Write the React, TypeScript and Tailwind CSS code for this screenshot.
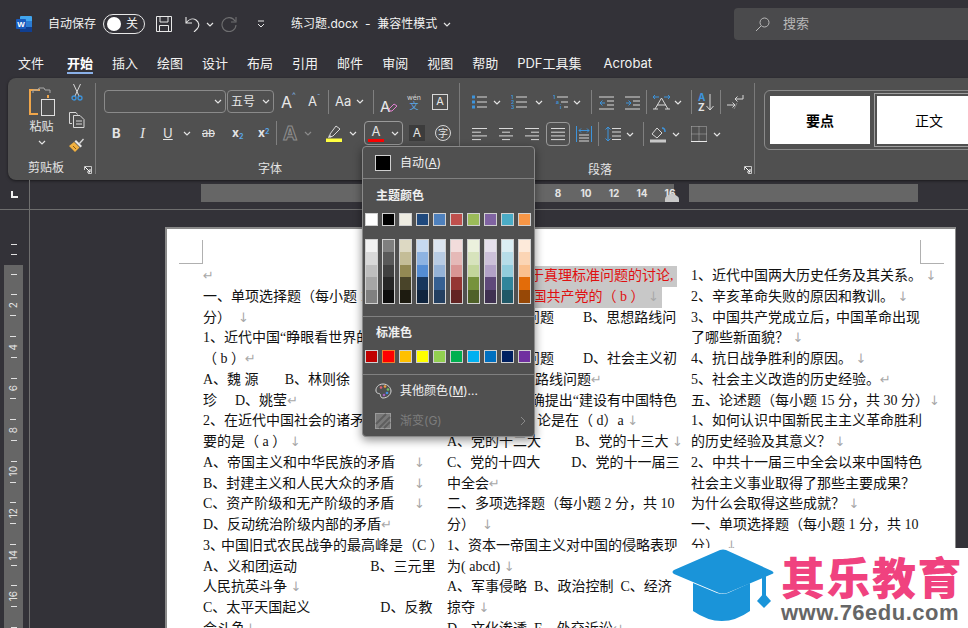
import type { ReactNode } from "react";

const menuText = "font-['Inter','Noto_Sans_CJK_SC',sans-serif]";

const themeTop = [
  "bg-[#FFFFFF]", "bg-[#000000]", "bg-[#EEECE1]", "bg-[#1F497D]", "bg-[#4F81BD]",
  "bg-[#C0504D]", "bg-[#9BBB59]", "bg-[#8064A2]", "bg-[#4BACC6]", "bg-[#F79646]",
];
const themeShades = [
  ["bg-[#F2F2F2]", "bg-[#D9D9D9]", "bg-[#BFBFBF]", "bg-[#A6A6A6]", "bg-[#808080]"],
  ["bg-[#7F7F7F]", "bg-[#595959]", "bg-[#404040]", "bg-[#262626]", "bg-[#0D0D0D]"],
  ["bg-[#DDD9C3]", "bg-[#C4BD97]", "bg-[#938953]", "bg-[#494429]", "bg-[#1D1B10]"],
  ["bg-[#C6D9F0]", "bg-[#8DB3E2]", "bg-[#548DD4]", "bg-[#17365D]", "bg-[#0F243E]"],
  ["bg-[#DBE5F1]", "bg-[#B8CCE4]", "bg-[#95B3D7]", "bg-[#366092]", "bg-[#244061]"],
  ["bg-[#F2DCDB]", "bg-[#E5B9B7]", "bg-[#D99694]", "bg-[#953734]", "bg-[#632423]"],
  ["bg-[#EBF1DD]", "bg-[#D7E3BC]", "bg-[#C3D69B]", "bg-[#76923C]", "bg-[#4F6128]"],
  ["bg-[#E5E0EC]", "bg-[#CCC1D9]", "bg-[#B2A2C7]", "bg-[#5F497A]", "bg-[#3F3151]"],
  ["bg-[#DBEEF3]", "bg-[#B7DDE8]", "bg-[#92CDDC]", "bg-[#31859B]", "bg-[#205867]"],
  ["bg-[#FDEADA]", "bg-[#FBD5B5]", "bg-[#FAC08F]", "bg-[#E36C09]", "bg-[#974806]"],
];
const standard = [
  "bg-[#C00000]", "bg-[#FF0000]", "bg-[#FFC000]", "bg-[#FFFF00]", "bg-[#92D050]",
  "bg-[#00B050]", "bg-[#00B0F0]", "bg-[#0070C0]", "bg-[#002060]", "bg-[#7030A0]",
];
const tabs = ["开始", "插入", "绘图", "设计", "布局", "引用", "邮件", "审阅", "视图", "帮助"];

function Chev({ className = "" }: { className?: string }) {
  return (
    <svg width="8" height="5" viewBox="0 0 8 5" className={`shrink-0 ${className}`}>
      <path d="M1 1l3 3 3-3" fill="none" stroke="#e4e4e4" strokeWidth="1.2" />
    </svg>
  );
}

function Sep({ className = "" }: { className?: string }) {
  return <div className={`w-px h-6 bg-[#808080] shrink-0 ${className}`} />;
}

function Lines({ rows, className = "" }: { rows: [number, number][]; className?: string }) {
  return (
    <svg width="16" height="16" viewBox="0 0 16 16" className={`shrink-0 ${className}`}>
      {rows.map(([a, b], i) => (
        <path key={i} d={`M${a} ${2.5 + i * 3.7}H${b}`} stroke="#d8d8d8" strokeWidth="1" />
      ))}
    </svg>
  );
}

function Launcher({ className = "" }: { className?: string }) {
  return (
    <svg width="8" height="8" viewBox="0 0 8 8" className={`shrink-0 ${className}`}>
      <path d="M.5 4V.5H7.5V7.5H4" fill="none" stroke="#c8c8c8" />
      <path d="M1 1l5 5M6 3v3H3" fill="none" stroke="#fff" />
    </svg>
  );
}

function WordLogo() {
  return (
    <svg width="16" height="16" viewBox="0 0 16 16" className="shrink-0">
      <rect x="4" y="0" width="12" height="16" rx="1" fill="#41a5ee" />
      <rect x="4" y="5" width="12" height="6" fill="#2b7cd3" />
      <rect x="4" y="11" width="12" height="5" fill="#103f91" />
      <rect x="0" y="3" width="10" height="10" rx="1" fill="#185abd" />
      <text x="5" y="11" textAnchor="middle" fontSize="8" fontWeight="700" fill="#fff" fontFamily="Liberation Sans">W</text>
    </svg>
  );
}

function PasteIcon() {
  return (
    <svg width="28" height="31" viewBox="0 0 28 31" className="shrink-0">
      <path d="M12 4H2v24h8" fill="none" stroke="#f0a64a" strokeWidth="2" />
      <path d="M5 7V4h5l1-2 h5l1 2h5v3" fill="none" stroke="#a8a8a8" />
      <path d="M20 9v3" stroke="#f0a64a" strokeWidth="2" />
      <rect x="13.5" y="13.5" width="13" height="16" fill="#505050" stroke="#e0e0e0" />
    </svg>
  );
}

function Scissors() {
  return (
    <svg width="12" height="17" viewBox="0 0 12 17" className="shrink-0">
      <path d="M2.5 0l5.5 12M9.5 0L4 12" fill="none" stroke="#d8d8d8" />
      <circle cx="3" cy="14" r="2" fill="none" stroke="#3d94dc" strokeWidth="1.3" />
      <circle cx="9" cy="14" r="2" fill="none" stroke="#3d94dc" strokeWidth="1.3" />
    </svg>
  );
}

function CopyIcon() {
  return (
    <svg width="16" height="16" viewBox="0 0 16 16" className="shrink-0">
      <path d="M3 11.5H.5V.5H7l1.500 2" fill="none" stroke="#d8d8d8" />
      <path d="M4.500 3.500H11l4 4v8H4.500z" fill="none" stroke="#d8d8d8" />
      <path d="M7 9h6M7 12h6" stroke="#d8d8d8" />
    </svg>
  );
}

function PainterIcon() {
  return (
    <svg width="16" height="16" viewBox="0 0 16 16" className="shrink-0">
      <path d="M10 6l4-4.500 1 1L11 7z" fill="#d8d8d8" />
      <path d="M7 3l6 6-1.500 1.500-6-6z" fill="#e8e8e8" />
      <path d="M5 5l5.500 5.500L6 15 0 9z" fill="#f0b040" />
      <path d="M4 9l3 3" stroke="#8a5a10" />
    </svg>
  );
}

function Highlighter() {
  return (
    <svg width="16" height="17" viewBox="0 0 16 17" className="shrink-0">
      <path d="M4 9l6-8 4 3-7 7-3 1z" fill="none" stroke="#d8d8d8" />
      <path d="M3 10l3 2-4 1z" fill="#d8d8d8" />
      <rect x="0" y="13.500" width="16" height="3.500" fill="#ffff40" />
    </svg>
  );
}

function Tick() {
  return (
    <div className="h-[10.400px] shrink-0 flex items-center">
      <div className="w-1.5 h-px bg-[#e0e0e0]" />
    </div>
  );
}

function Ruler() {
  const nums = [2, 4, 6, 8, 10, 12, 14, 16, 18];
  return (
    <div className="w-[30px] shrink-0 border-r border-[#6e6e6e] pl-1 flex flex-col">
      <div className="h-[55px] shrink-0 w-[19px] flex flex-col items-center">
        <div className="mt-[34px] w-1.5 h-px bg-[#e0e0e0]" />
        <div className="mt-[9px] w-1.5 h-px bg-[#e0e0e0]" />
      </div>
      <div className="flex-1 w-[19px] bg-[#666666] flex flex-col items-center overflow-hidden pt-[4px]">
        <Tick />
        <div className="h-[10.400px] shrink-0" />
        <Tick />
        {nums.map((n) => (
          <div key={n} className="shrink-0 flex flex-col items-center">
            <div className="h-[10.400px] flex items-center justify-center text-[10px] leading-none text-[#e4e4e4] -rotate-90 font-['Inter',sans-serif]">
              {n}
            </div>
            <Tick />
            <div className="h-[10.400px]" />
            <Tick />
          </div>
        ))}
      </div>
    </div>
  );
}

function Mk({ t = "↓" }: { t?: string }) {
  return <span className="text-[#a8a8a8] font-['DejaVu_Sans',sans-serif] text-[13px]">{t}</span>;
}

function L({ children, className = "" }: { children?: ReactNode; className?: string }) {
  return <div className={`h-[20.750px] leading-[20.750px] whitespace-pre ${className}`}>{children}</div>;
}

function ColumnOne() {
  return (
    <div className="w-[222px] shrink-0">
      <L><Mk t="↵" /></L>
      <L>一、单项选择题（每小题 1 分，共 10</L>
      <L>分）  <Mk /></L>
      <L>1、近代中国“睁眼看世界的第一人是</L>
      <L>（ b ）<Mk t="↵" /></L>
      <L>A、魏 源<span className="ml-[26px]">B、林则徐</span><span className="ml-[14px]">C、龚自</span></L>
      <L>珍<span className="ml-[18px]">D、姚莹</span><Mk t="↵" /></L>
      <L>2、在近代中国社会的诸矛盾中，最主</L>
      <L>要的是（ a ） <Mk /></L>
      <L className="flex justify-between">A、帝国主义和中华民族的矛盾<Mk /></L>
      <L className="flex justify-between">B、封建主义和人民大众的矛盾<Mk /></L>
      <L className="flex justify-between">C、资产阶级和无产阶级的矛盾<Mk /></L>
      <L>D、反动统治阶级内部的矛盾<Mk t="↵" /></L>
      <L>3<span className="-mr-[3px]">、</span>中国旧式农民战争的最高峰是（C ）</L>
      <L>A、义和团运动<span className="ml-[73px]">B、三元里</span></L>
      <L>人民抗英斗争 <Mk /></L>
      <L>C、太平天国起义<span className="ml-[70px]">D、反教</span></L>
      <L>会斗争<Mk /></L>
    </div>
  );
}

function ColumnTwo() {
  return (
    <div className="w-[230px] shrink-0 ml-[22px]">
      <L className="flex justify-end bg-[#c8c8c8] text-[#e01010]">于真理标准问题的讨论, </L>
      <L className="flex justify-end w-[215px] bg-[#c8c8c8] text-[#e01010] pr-[3px]">国共产党的（ b ） <Mk /></L>
      <L className="pl-[79px]">问题<span className="ml-[29px]">B、思想路线问</span></L>
      <L />
      <L className="pl-[79px]">问题<span className="ml-[29px]">D、社会主义初</span></L>
      <L className="pl-[88px]">路线问题<Mk t="↵" /></L>
      <L className="flex justify-end">确提出“建设有中国特色</L>
      <L className="pl-[90px]">论是在（ d）a <Mk /></L>
      <L>A、党的十二大<span className="ml-[34px]">B、党的十三大 </span><Mk /></L>
      <L>C、党的十四大<span className="ml-[31px]">D、党的十一届三</span></L>
      <L>中全会<Mk t="↵" /></L>
      <L>二、多项选择题（每小题 2 分，共 10</L>
      <L>分）  <Mk /></L>
      <L>1、资本一帝国主义对中国的侵略表现</L>
      <L>为( abcd) <Mk /></L>
      <L>A、军事侵略  B、政治控制  C、经济</L>
      <L>掠夺 <Mk /></L>
      <L>D、文化渗透  E、外交诉讼<Mk t="↵" /></L>
    </div>
  );
}

function ColumnThree() {
  return (
    <div className="w-[234px] shrink-0 ml-[14px]">
      <L>1、近代中国两大历史任务及其关系。 <Mk /></L>
      <L>2、辛亥革命失败的原因和教训。 <Mk /></L>
      <L>3、中国共产党成立后<span className="-mr-[2px]">，</span>中国革命出现</L>
      <L>了哪些新面貌？ <Mk /></L>
      <L>4、抗日战争胜利的原因。 <Mk /></L>
      <L>5、社会主义改造的历史经验。<Mk t="↵" /></L>
      <L>五、论述题（每小题 15 分，共 30 分）<Mk /></L>
      <L>1、如何认识中国新民主主义革命胜利</L>
      <L>的历史经验及其意义？ <Mk /></L>
      <L>2、中共十一届三中全会以来中国特色</L>
      <L>社会主义事业取得了那些主要成果？</L>
      <L>为什么会取得这些成就？ <Mk /></L>
      <L>一、单项选择题（每小题 1 分，共 10</L>
      <L>分）  <Mk /></L>
    </div>
  );
}

function FontMenu() {
  return (
    <div className={`absolute left-[362px] top-[146px] w-[173px] h-[291px] bg-[#505050] border border-[#8a8a8a] rounded-[4px] shadow-[0_3px_10px_rgba(0,0,0,0.45)] text-[12px] text-[#f0f0f0] flex flex-col ${menuText}`}>
      <div className="h-[30px] flex items-center pl-[12px] mt-px">
        <div className="w-4 h-4 bg-black border border-[#d0d0d0]" />
        <span className="ml-[9px]">自动(<span className="underline">A</span>)</span>
      </div>
      <div className="h-px bg-[#808080]" />
      <div className="h-[34px] flex items-center pl-[13px] font-bold">主题颜色</div>
      <div className="flex gap-1 pl-[2px]">
        {themeTop.map((c) => (
          <div key={c} className={`w-[13px] h-[13px] border border-[#d0d0d0] ${c}`} />
        ))}
      </div>
      <div className="flex gap-1 pl-[2px] mt-[13px]">
        {themeShades.map((col, i) => (
          <div key={i} className="w-[13px] border border-[#d0d0d0] flex flex-col">
            {col.map((c) => (
              <div key={c} className={`h-[12.600px] ${c}`} />
            ))}
          </div>
        ))}
      </div>
      <div className="h-px bg-[#808080] mt-[12px]" />
      <div className="h-[34px] flex items-center pl-[13px] font-bold">标准色</div>
      <div className="flex gap-1 pl-[2px]">
        {standard.map((c, i) => (
          <div key={c} className={`w-[13px] h-[13px] border ${i === 1 ? "border-[#f08030]" : "border-[#d0d0d0]"} ${c}`} />
        ))}
      </div>
      <div className="h-px bg-[#808080] mt-[11px]" />
      <div className="h-[30px] flex items-center pl-[12px] mt-px">
        <svg width="17" height="16" viewBox="0 0 17 16" className="shrink-0">
          <path d="M8 1C3 1 .5 5 1 8s3 2 4 3 0 4 3 4c5 0 8-4 8-7s-3-7-8-7z" fill="none" stroke="#d8d8d8" />
          <circle cx="6" cy="4.500" r="1.300" fill="#e06070" />
          <circle cx="10" cy="3.500" r="1.300" fill="#f0a040" />
          <circle cx="13" cy="6.500" r="1.300" fill="#70c060" />
          <circle cx="12" cy="10" r="1.300" fill="#4090e0" />
          <circle cx="9" cy="12" r="1.300" fill="#a060c0" />
        </svg>
        <span className="ml-[8px]">其他颜色(<span className="underline">M</span>)...</span>
      </div>
      <div className="h-[30px] flex items-center pl-[12px] text-[#7d7d7d]">
        <svg width="16" height="16" viewBox="0 0 16 16" className="shrink-0">
          <rect x=".5" y=".5" width="15" height="15" fill="#7a7a7a" stroke="#9a9a9a" />
          <path d="M1 11L11 1M4 15L15 4M9 15l6-6" stroke="#5e5e5e" strokeWidth="2" />
        </svg>
        <span className="ml-[9px]">渐变(G)</span>
        <svg width="6" height="10" viewBox="0 0 6 10" className="ml-auto mr-[8px]">
          <path d="M1 1l4 4-4 4" fill="none" stroke="#8a8a8a" />
        </svg>
      </div>
    </div>
  );
}

function Watermark() {
  return (
    <div className="absolute left-[672px] top-[548px] w-[296px] h-[80px] bg-white flex items-start">
      <svg width="104" height="76" viewBox="0 0 104 76" className="shrink-0 mt-[1px]">
        <path d="M48 1q3-1 6 0l46 21q3 2 0 3L55 44q-4 1-8 0L2 25q-3-2 0-4z" fill="#1a94d9" />
        <path d="M21 34l24 10q6 2 11 0l22-10v28q-28 20-57 0z" fill="#1a94d9" />
        <path d="M90 27h4v21h-4z" fill="#1a94d9" />
        <path d="M92 44l7 8-7 7-7-7z" fill="#1a94d9" />
      </svg>
      <div className="ml-[5px] flex flex-col font-['Noto_Sans_CJK_SC',sans-serif]">
        <div className="text-[44px] leading-[50px] font-black text-[#f0427f] tracking-[1.500px] mt-[3px] whitespace-nowrap">其乐教育</div>
        <div className="text-[22px] leading-[24px] font-bold text-[#666666] tracking-[0.500px] font-['Liberation_Sans',sans-serif] whitespace-nowrap">www.76edu.com</div>
      </div>
    </div>
  );
}

export default function App() {
  return (
    <div className={`relative w-[968px] h-[628px] overflow-hidden bg-[#333238] text-[#f2f2f2] flex flex-col ${menuText}`}>
      {/* title bar */}
      <div className="h-[48px] shrink-0 flex items-center text-[12px]">
        <div className="ml-4"><WordLogo /></div>
        <span className="ml-4">自动保存</span>
        <div className="ml-[7px] w-[42px] h-5 rounded-full border border-[#e8e8e8] flex items-center pl-[3px]">
          <div className="w-3.5 h-3.5 rounded-full bg-white" />
          <span className="ml-[5px]">关</span>
        </div>
        <svg width="16" height="16" viewBox="0 0 16 16" className="ml-[11px] shrink-0">
          <path d="M.5.5h15v15H.5zM4 .5V6h8V.5M3.500 15.500V9.500h9v6" fill="none" stroke="#e8e8e8" />
        </svg>
        <svg width="16" height="16" viewBox="0 0 16 16" className="ml-[13px] shrink-0">
          <path d="M1 1v6h6M1 7c3-4 7-5 10-3s4 6 1 9l-3 3" fill="none" stroke="#e8e8e8" strokeWidth="1.100" />
        </svg>
        <Chev className="ml-[5px]" />
        <svg width="16" height="16" viewBox="0 0 16 16" className="ml-[7px] shrink-0">
          <path d="M15 1v5h-5M14 5a7 7 0 1 0 1 4" fill="none" stroke="#6e6e70" strokeWidth="1.100" />
        </svg>
        <svg width="8" height="9" viewBox="0 0 8 9" className="ml-[20px] shrink-0">
          <path d="M1 1h6M1 4l3 3 3-3" fill="none" stroke="#e8e8e8" />
        </svg>
        <span className="ml-[26px] whitespace-pre">练习题.docx  -  兼容性模式</span>
        <Chev className="ml-[6px]" />
        <div className="ml-auto w-[234px] h-8 rounded-l-[4px] bg-[#4a4a4c] flex items-center pl-[21px] text-[13px] text-[#b8b8b8]">
          <svg width="15" height="15" viewBox="0 0 15 15" className="shrink-0">
            <circle cx="9.500" cy="5.500" r="4.500" fill="none" stroke="#b8b8b8" />
            <path d="M6 9l-5 5" stroke="#b8b8b8" />
          </svg>
          <span className="ml-[13px]">搜索</span>
        </div>
      </div>

      {/* tabs */}
      <div className="h-[30px] shrink-0 flex items-start pl-[18px] text-[13px] leading-[30px]">
        <div className="mr-[23px]">文件</div>
        {tabs.map((t, i) => (
          <div key={t} className={`mr-[19px] h-[26px] leading-[30px] ${i === 0 ? "font-bold border-b-2 border-[#8ab0e8] text-white" : ""}`}>
            {t}
          </div>
        ))}
        <div>PDF工具集</div>
        <div className="ml-[22px]">Acrobat</div>
      </div>

      {/* ribbon */}
      <div className="h-[102px] shrink-0 ml-2 bg-[#505050] rounded-l-[8px] shadow-[0_1px_3px_rgba(0,0,0,0.5)] flex pt-[5px] pb-[6px] text-[#e4e4e4]">
        <div className="w-[88px] shrink-0 border-r border-[#7a7a7a] flex relative">
          <div className="w-[60px] flex flex-col items-center pl-[7px] pt-[3px]">
            <PasteIcon />
            <span className="text-[12px] leading-[16px] mt-[2px]">粘贴</span>
            <Chev className="mt-[5px]" />
          </div>
          <div className="flex flex-col items-center pt-[1px] ml-[1px]">
            <Scissors />
            <div className="mt-[11px]"><CopyIcon /></div>
            <div className="mt-[9px]"><PainterIcon /></div>
          </div>
          <div className="absolute left-[20px] top-[77px] text-[12px] leading-[16px]">剪贴板</div>
          <Launcher className="absolute left-[76px] top-[83px]" />
        </div>

        {/* font group */}
        <div className="w-[364px] shrink-0 border-r border-[#7a7a7a] flex flex-col">
          <div className="flex items-center h-[23px] mt-[7px] pl-[8px] text-[#e8e8e8]">
            <div className="w-[122px] h-[23px] border border-[#8a8a8a] rounded-[4px] flex items-center justify-end pr-[3px]"><Chev /></div>
            <div className="ml-px w-[47px] h-[23px] border border-[#8a8a8a] rounded-[4px] flex items-center justify-between px-[3px] text-[12px]">五号<Chev /></div>
            <span className="ml-[7px] w-4 text-[16px] leading-none relative">A<span className="absolute left-[11px] -top-[3px] text-[8px] text-[#7fb4e8]">^</span></span>
            <span className="ml-[11px] w-3.5 text-[13px] leading-none relative">A<span className="absolute left-[9px] -top-[2px] text-[8px] text-[#7fb4e8]">ˇ</span></span>
            <Sep className="ml-[6px]" />
            <span className="ml-[6px] w-[18px] text-[13px] whitespace-nowrap">Aa</span>
            <Chev className="ml-[3px]" />
            <Sep className="ml-[9px]" />
            <div className="ml-[6px] relative w-4 h-4">
              <span className="text-[15px] leading-none">A</span>
              <svg width="10" height="9" viewBox="0 0 10 9" className="absolute left-[8px] top-[9px]">
                <path d="M1 6l5-5 3 2-5 5H2z" fill="none" stroke="#e080d0" />
              </svg>
            </div>
            <div className="ml-[11px] w-3.5 flex flex-col items-center leading-none">
              <span className="text-[7px] text-[#d8d8d8]">wén</span>
              <span className="text-[9px] text-[#5aa8e8]">文</span>
            </div>
            <div className="ml-[11px] w-[16px] h-[16px] border border-[#d8d8d8] flex items-center justify-center text-[11px] leading-none">A</div>
          </div>
          <div className="flex items-center h-[24px] mt-[8px] pl-[16px] text-[#e4e4e4]">
            <span className="w-2.5 text-[13px] font-bold leading-none">B</span>
            <span className="ml-[18px] w-2 text-[15px] italic leading-none font-['Liberation_Serif',serif]">I</span>
            <span className="ml-[15px] w-[10px] text-[13px] underline leading-none">U</span>
            <Chev className="ml-[10px]" />
            <span className="ml-[11px] w-4 text-[11px] line-through leading-none">ab</span>
            <span className="ml-[14px] w-[12px] text-[12px] font-bold leading-none">x<sub className="text-[7px] text-[#5aa8e8]">2</sub></span>
            <span className="ml-[14px] w-[12px] text-[12px] font-bold leading-none">x<sup className="text-[7px] text-[#5aa8e8]">2</sup></span>
            <Sep className="ml-[6px]" />
            <span className="ml-[6px] w-4 text-[19px] font-bold leading-none text-transparent [-webkit-text-stroke:1px_#8e8e8e]">A</span>
            <Chev className="ml-[5px] opacity-40" />
            <div className="ml-[14px]"><Highlighter /></div>
            <Chev className="ml-[7px]" />
            <div className="ml-[7px] w-[39px] h-[24px] border border-[#9a9a9a] rounded-[4px] flex items-center pl-[3px]">
              <div className="w-4 flex flex-col items-center leading-none text-[13px]">
                A
                <div className="w-4 h-[3px] bg-[#ff0000] mt-[1px]" />
              </div>
              <Chev className="ml-[7px]" />
            </div>
            <div className="ml-[6px] w-4 h-4 bg-[#3c3c3c] flex items-center justify-center text-[12px] leading-none">A</div>
            <div className="ml-[10px] w-4 h-4 rounded-full border border-[#d8d8d8] flex items-center justify-center text-[10px] leading-none">字</div>
          </div>
          <div className="relative flex-1">
            <div className="absolute left-[162px] top-[16px] text-[12px] leading-[16px]">字体</div>
          </div>
        </div>

        {/* paragraph group */}
        <div className="w-[295px] shrink-0 border-r border-[#7a7a7a] flex flex-col">
          <div className="flex items-center h-[24px] mt-[7px] pl-[11px]">
            <svg width="16" height="16" viewBox="0 0 16 16" className="shrink-0">
              <path d="M1 1.500h3v3H1zM1 6.500h3v3H1zM1 11.500h3v3H1z" fill="#3d94dc" />
              <path d="M6 3h10M6 8h10M6 13h10" stroke="#d8d8d8" />
            </svg>
            <Chev className="ml-[6px]" />
            <svg width="16" height="16" viewBox="0 0 16 16" className="ml-[10px] shrink-0">
              <text x="0" y="5" fontSize="5" fill="#3d94dc" fontWeight="700">1</text>
              <text x="0" y="10" fontSize="5" fill="#3d94dc" fontWeight="700">2</text>
              <text x="0" y="15" fontSize="5" fill="#3d94dc" fontWeight="700">3</text>
              <path d="M5 3h11M5 8h11M5 13h11" stroke="#d8d8d8" />
            </svg>
            <Chev className="ml-[8px]" />
            <svg width="16" height="16" viewBox="0 0 16 16" className="ml-[10px] shrink-0">
              <text x="0" y="5" fontSize="5" fill="#3d94dc" fontWeight="700">1</text>
              <text x="3" y="10" fontSize="5" fill="#3d94dc" fontWeight="700">a</text>
              <text x="7" y="15" fontSize="5" fill="#3d94dc" fontWeight="700">i</text>
              <path d="M4 3h11M8 8h7M11 13h4" stroke="#d8d8d8" />
            </svg>
            <Chev className="ml-[4px]" />
            <Sep className="ml-[10px]" />
            <svg width="15" height="15" viewBox="0 0 15 15" className="ml-[7px] shrink-0">
              <path d="M0 2h15M8 6h7M8 10h7M0 14h15" stroke="#d8d8d8" />
              <path d="M6 8H1M3.500 5.500L1 8l2.500 2.500" fill="none" stroke="#3d94dc" />
            </svg>
            <svg width="15" height="15" viewBox="0 0 15 15" className="ml-[11px] shrink-0">
              <path d="M0 2h15M8 6h7M8 10h7M0 14h15" stroke="#d8d8d8" />
              <path d="M1 8h5M3.500 5.500L6 8l-2.500 2.500" fill="none" stroke="#3d94dc" />
            </svg>
            <Sep className="ml-[6px]" />
            <svg width="17" height="16" viewBox="0 0 17 16" className="ml-[6px] shrink-0">
              <path d="M2 15l6.500-11L15 15M0 15h5M12 15h5M4 11h9" fill="none" stroke="#d8d8d8" />
              <path d="M0 3h6M2 1L0 3l2 2M11 3h6M15 1l2 2-2 2" fill="none" stroke="#3d94dc" />
            </svg>
            <Chev className="ml-[4px]" />
            <Sep className="ml-[9px]" />
            <div className="ml-[6px] w-[18px] flex items-center">
              <div className="flex flex-col text-[10px] leading-[10px] font-bold">
                <span className="text-[#3d94dc]">A</span>
                <span>Z</span>
              </div>
              <svg width="8" height="17" viewBox="0 0 8 17" className="ml-px">
                <path d="M4 0v16M.5 12L4 16l3.500-4" fill="none" stroke="#d8d8d8" />
              </svg>
            </div>
            <Sep className="ml-[4px]" />
            <svg width="17" height="16" viewBox="0 0 17 16" className="ml-[6px] shrink-0">
              <path d="M16 1v4H8M10.500 2.500L8 5l2.500 2.500M0 11h8M5.500 8.500L8 11l-2.500 2.500" fill="none" stroke="#d8d8d8" />
              <path d="M10 9l-3 6" stroke="#888" />
            </svg>
          </div>
          <div className="flex items-center h-[24px] mt-[8px] pl-[12px]">
            <Lines rows={[[0, 15], [0, 9], [0, 15], [0, 9]]} />
            <Lines className="ml-[11px]" rows={[[0, 14], [3, 11], [0, 14], [3, 11]]} />
            <Lines className="ml-[10px]" rows={[[0, 14], [6, 14], [0, 14], [6, 14]]} />
            <div className="ml-[5px] w-[24px] h-[24px] border border-[#9a9a9a] rounded-[4px] flex items-center justify-center">
              <Lines className="ml-px" rows={[[0, 14], [0, 14], [0, 14], [0, 14]]} />
            </div>
            <svg width="16" height="16" viewBox="0 0 16 16" className="ml-[6px] shrink-0">
              <path d="M.5 0v16M15.500 0v16" stroke="#3d94dc" />
              <path d="M3 4.500h10M5 2.500L3 4.500l2 2M11 2.500l2 2-2 2" fill="none" stroke="#3d94dc" />
              <path d="M3 9h10M3 12h10M3 15h10" stroke="#d8d8d8" />
            </svg>
            <Sep className="ml-[6px]" />
            <svg width="16" height="16" viewBox="0 0 16 16" className="ml-[6px] shrink-0">
              <path d="M3 1v14M.5 3.500L3 1l2.500 2.500M.5 12.500L3 15l2.500-2.500" fill="none" stroke="#3d94dc" />
              <path d="M7 2.500h9M7 6h9M7 10h9M7 13.500h9" stroke="#d8d8d8" />
            </svg>
            <Chev className="ml-[5px]" />
            <Sep className="ml-[9px]" />
            <svg width="16" height="17" viewBox="0 0 16 17" className="ml-[6px] shrink-0">
              <path d="M2 8l5-6 5 5-5 5z" fill="none" stroke="#d8d8d8" />
              <path d="M12 2c2 0 3 2 3 4" fill="none" stroke="#3d94dc" strokeWidth="1.500" />
              <rect x="0" y="13.500" width="16" height="3" fill="#c8c8c8" />
            </svg>
            <Chev className="ml-[6px]" />
            <svg width="16" height="16" viewBox="0 0 16 16" className="ml-[11px] shrink-0">
              <path d="M.5.500h15v15M.5.500v15M8 .500v15M.5 8h15" fill="none" stroke="#b0b0b0" strokeDasharray="1 1" />
              <path d="M0 15.500h16" stroke="#e8e8e8" />
            </svg>
            <Chev className="ml-[6px]" />
          </div>
          <div className="relative flex-1">
            <div className="absolute left-[128px] top-[16px] text-[12px] leading-[16px]">段落</div>
            <Launcher className="absolute left-[284px] top-[20px]" />
          </div>
        </div>

        {/* styles */}
        <div className="flex-1 min-w-0 overflow-hidden pl-[9px] pt-[7px]">
          <div className="w-[260px] h-[60px] border border-[#8a8a8a] rounded-[6px] flex items-center pl-[5px] text-[14px] text-black">
            <div className="w-[100px] h-[48px] bg-white flex items-center justify-center font-bold shrink-0">要点</div>
            <div className="ml-[4px] p-[2px] border border-[#a0a0a0] shrink-0">
              <div className="w-[104px] h-[48px] bg-white flex items-center justify-center">正文</div>
            </div>
          </div>
        </div>
      </div>

      {/* horizontal ruler */}
      <div className="h-[30px] shrink-0 border-b border-[#6e6e6e] flex">
        <div className="w-[30px] shrink-0 border-r border-[#6e6e6e] flex items-start pl-[11px] pt-[11px]">
          <svg width="7" height="7" viewBox="0 0 7 7"><path d="M1 0v6h6" fill="none" stroke="#f0f0f0" strokeWidth="2" /></svg>
        </div>
        <div className="flex mt-[4px] h-[18px] ml-[171px]">
          <div className="relative w-[473px] bg-[#666666] flex items-center justify-end text-[10px] font-bold text-[#e4e4e4]">
            <span className="w-[28px] text-center">8</span>
            <span className="w-[28px] text-center">10</span>
            <span className="w-[28px] text-center">12</span>
            <span className="w-[28px] text-center">14</span>
            <span className="w-[28px] text-center -mr-[10px]">16</span>
            <svg width="14" height="9" viewBox="0 0 14 9" className="absolute right-[-5px] bottom-0">
              <path d="M0 9V6q0-2 2-3l5-3 5 3q2 1 2 3v3z" fill="#c8c8c8" />
            </svg>
          </div>
          <div className="ml-[15px] w-[229px] bg-[#666666]" />
        </div>
      </div>

      {/* document area */}
      <div className="flex-1 min-h-0 flex">
        <Ruler />
        <div className="flex-1 overflow-hidden pl-[135px] pt-[17px]">
          <div className="relative w-[791px] h-[500px] bg-white border-t-2 border-l-2 border-r border-[#8a8a8a] pl-[36px] pt-[37px] flex text-[14px] text-[#111] font-['Liberation_Serif','Noto_Sans_CJK_SC',serif]">
            <div className="absolute left-[12px] top-[11px] w-6 h-6 border-r border-b border-[#b0b0b0]" />
            <div className="absolute left-[753px] top-[11px] w-6 h-6 border-l border-b border-[#b0b0b0]" />
            <ColumnOne />
            <ColumnTwo />
            <ColumnThree />
          </div>
        </div>
      </div>

      <FontMenu />
      <Watermark />
    </div>
  );
}
